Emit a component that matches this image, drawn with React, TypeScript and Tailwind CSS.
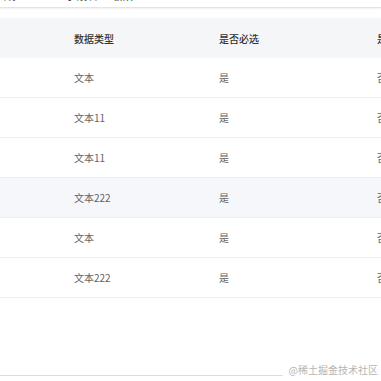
import React from 'react';

const rows = [
  { type: '文本', required: '是', extra: '否' },
  { type: '文本11', required: '是', extra: '否' },
  { type: '文本11', required: '是', extra: '否' },
  { type: '文本222', required: '是', extra: '否', hover: true },
  { type: '文本', required: '是', extra: '否' },
  { type: '文本222', required: '是', extra: '否' },
];

const App: React.FC = () => {
  return (
    <div
      className="w-[381px] h-[381px] bg-white overflow-hidden flex flex-col"
      style={{ fontFamily: '"Noto Sans CJK SC", "Noto Sans", sans-serif' }}
    >
      {/* clipped toolbar above the table */}
      <div className="h-[8px] overflow-hidden border-b border-[#e4e4e4] shadow-[0_1px_2px_rgba(0,0,0,0.06)]">
        <div className="-mt-[11px] flex text-[11px] leading-[12px] text-[#333]">
          <span className="-ml-[4px] w-[69px]">名称</span>
          <span className="w-[49px]">字段名</span>
          <span>操作</span>
        </div>
      </div>

      <div className="mt-[10px] overflow-hidden">
        <div className="w-[520px] text-[10px]">
          <div className="flex h-[40px] items-center bg-[#f5f6f8] text-[#333] font-medium">
            <div className="w-[62px]" />
            <div className="w-[145px] pl-[12px]">数据类型</div>
            <div className="w-[158px] pl-[12px]">是否必选</div>
            <div className="flex-1 pl-[12px]">是否可编辑</div>
          </div>
          {rows.map((r, i) => (
            <div
              key={i}
              className={`flex h-[40px] items-center border-b border-[#ebeef5] text-[#606266] ${
                r.hover ? 'bg-[#f5f7fa]' : 'bg-white'
              }`}
            >
              <div className="w-[62px]" />
              <div className="w-[145px] pl-[12px]">{r.type}</div>
              <div className="w-[158px] pl-[12px]">{r.required}</div>
              <div className="flex-1 pl-[12px]">{r.extra}</div>
            </div>
          ))}
        </div>
      </div>

      <div className="flex-1" />
      <div className="flex items-end h-[16px] mb-[4px]">
        <div className="flex-1 border-b border-[#dcdcdc] mb-[1px]" />
        <span className="pl-[6px] pr-[3px] text-[10px] leading-[14px] text-[#b5b5b5] whitespace-nowrap">
          @稀土掘金技术社区
        </span>
      </div>
    </div>
  );
};

export default App;
